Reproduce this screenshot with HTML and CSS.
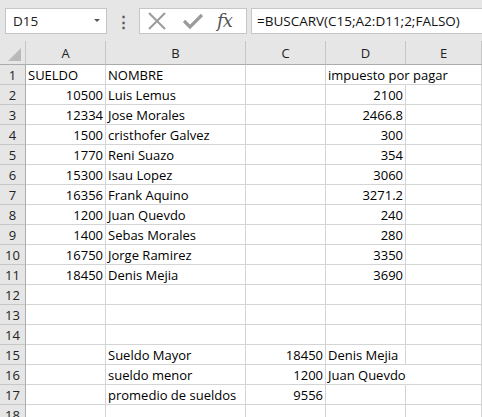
FILE: index.html
```html
<!DOCTYPE html>
<html lang="es">
<head>
    <meta charset="UTF-8">
    <title>BUSCARV - Hoja1</title>
    <link rel="stylesheet" href="styles.css">
</head>
<body>
    <div class="formula-bar">
        <div class="name-box">
            <span>D15</span>
            <span class="arrow"></span>
        </div>
        <div class="grip">⋮</div>
        <div class="icon-box">
            <svg width="20" height="18" viewBox="0 0 20 18"><path d="M2 1 L18 17 M18 1 L2 17" stroke="#9b9b9b" stroke-width="2" fill="none"/></svg>
            <svg width="20" height="18" viewBox="0 0 20 18"><path d="M1 9 L7 15 L19 3" stroke="#9b9b9b" stroke-width="3.2" fill="none"/></svg>
            <span class="fx">fx</span>
        </div>
        <div class="formula">=BUSCARV(C15;A2:D11;2;FALSO)</div>
    </div>

    <div class="sheet">
        <div class="corner"><span class="tri"></span></div>
        <div class="col-head">A</div>
        <div class="col-head">B</div>
        <div class="col-head">C</div>
        <div class="col-head">D</div>
        <div class="col-head">E</div>

        <div class="row-head">1</div>
        <div class="cell">SUELDO</div><div class="cell">NOMBRE</div><div class="cell"></div><div class="cell over">impuesto por pagar</div><div class="cell"></div>

        <div class="row-head">2</div>
        <div class="cell num">10500</div><div class="cell">Luis Lemus</div><div class="cell"></div><div class="cell num">2100</div><div class="cell"></div>
        <div class="row-head">3</div>
        <div class="cell num">12334</div><div class="cell">Jose Morales</div><div class="cell"></div><div class="cell num">2466.8</div><div class="cell"></div>
        <div class="row-head">4</div>
        <div class="cell num">1500</div><div class="cell">cristhofer Galvez</div><div class="cell"></div><div class="cell num">300</div><div class="cell"></div>
        <div class="row-head">5</div>
        <div class="cell num">1770</div><div class="cell">Reni Suazo</div><div class="cell"></div><div class="cell num">354</div><div class="cell"></div>
        <div class="row-head">6</div>
        <div class="cell num">15300</div><div class="cell">Isau Lopez</div><div class="cell"></div><div class="cell num">3060</div><div class="cell"></div>
        <div class="row-head">7</div>
        <div class="cell num">16356</div><div class="cell">Frank Aquino</div><div class="cell"></div><div class="cell num">3271.2</div><div class="cell"></div>
        <div class="row-head">8</div>
        <div class="cell num">1200</div><div class="cell">Juan Quevdo</div><div class="cell"></div><div class="cell num">240</div><div class="cell"></div>
        <div class="row-head">9</div>
        <div class="cell num">1400</div><div class="cell">Sebas Morales</div><div class="cell"></div><div class="cell num">280</div><div class="cell"></div>
        <div class="row-head">10</div>
        <div class="cell num">16750</div><div class="cell">Jorge Ramirez</div><div class="cell"></div><div class="cell num">3350</div><div class="cell"></div>
        <div class="row-head">11</div>
        <div class="cell num">18450</div><div class="cell">Denis Mejia</div><div class="cell"></div><div class="cell num">3690</div><div class="cell"></div>

        <div class="row-head">12</div>
        <div class="cell"></div><div class="cell"></div><div class="cell"></div><div class="cell"></div><div class="cell"></div>
        <div class="row-head">13</div>
        <div class="cell"></div><div class="cell"></div><div class="cell"></div><div class="cell"></div><div class="cell"></div>
        <div class="row-head">14</div>
        <div class="cell"></div><div class="cell"></div><div class="cell"></div><div class="cell"></div><div class="cell"></div>

        <div class="row-head">15</div>
        <div class="cell"></div><div class="cell">Sueldo Mayor</div><div class="cell num">18450</div><div class="cell">Denis Mejia</div><div class="cell"></div>
        <div class="row-head">16</div>
        <div class="cell"></div><div class="cell">sueldo menor</div><div class="cell num">1200</div><div class="cell over">Juan Quevdo</div><div class="cell"></div>
        <div class="row-head">17</div>
        <div class="cell"></div><div class="cell">promedio de sueldos</div><div class="cell num">9556</div><div class="cell"></div><div class="cell"></div>
        <div class="row-head">18</div>
        <div class="cell"></div><div class="cell"></div><div class="cell"></div><div class="cell"></div><div class="cell"></div>
    </div>
</body>
</html>
```

FILE: styles.css
```css
body {
    margin: 0;
    background: #e6e6e6;
    font-family: "Open Sans", "Liberation Sans", sans-serif;
    overflow: hidden;
    width: 482px;
    height: 417px;
}

.formula-bar {
    display: flex;
    align-items: center;
    height: 41px;
    padding-left: 5px;
}
.name-box {
    box-sizing: border-box;
    width: 102px;
    height: 26px;
    background: white;
    border: 1px solid #c6c6c6;
    display: flex;
    align-items: center;
    justify-content: space-between;
    padding: 0 6px 0 7px;
    font-size: 13.5px;
    color: #222;
}
.arrow {
    width: 0;
    height: 0;
    border-left: 3.5px solid transparent;
    border-right: 3.5px solid transparent;
    border-top: 3.5px solid #555;
}
.grip {
    width: 32px;
    text-align: center;
    color: #555;
    font-size: 15px;
    font-weight: bold;
}
.icon-box {
    box-sizing: border-box;
    width: 108px;
    height: 26px;
    background: white;
    border: 1px solid #c6c6c6;
    display: flex;
    align-items: center;
    gap: 16px;
    padding-left: 7px;
}
.fx {
    font-family: "DejaVu Serif", "Liberation Serif", serif;
    font-style: italic;
    font-size: 18px;
    color: #555;
    margin-left: -2px;
    letter-spacing: -1px;
}
.formula {
    box-sizing: border-box;
    flex: 1;
    height: 26px;
    margin-left: 4px;
    background: white;
    border: 1px solid #c6c6c6;
    border-right: none;
    padding-left: 5px;
    font-size: 13.5px;
    line-height: 24px;
    color: #111;
}

.sheet {
    display: grid;
    grid-template-columns: 26px 80px 140px 80px 80px 76px;
    grid-template-rows: 24px repeat(18, 20px);
    background: white;
    font-size: 13px;
}
.corner {
    background: #e6e6e6;
    border-right: 1px solid #c6c6c6;
    border-bottom: 1px solid #ababab;
    position: relative;
}
.tri {
    position: absolute;
    right: 4px;
    bottom: 3px;
    width: 0;
    height: 0;
    border-left: 13px solid transparent;
    border-bottom: 13px solid #b9b9b9;
}
.col-head {
    background: #e6e6e6;
    border-right: 1px solid #c6c6c6;
    border-bottom: 1px solid #ababab;
    text-align: center;
    line-height: 23px;
    color: #222;
    padding-top: 1px;
    box-sizing: border-box;
}
.row-head {
    background: #e6e6e6;
    border-right: 1px solid #ababab;
    border-bottom: 1px solid #c6c6c6;
    text-align: center;
    line-height: 20px;
    color: #222;
}
.cell {
    border-right: 1px solid #d4d4d4;
    border-bottom: 1px solid #d4d4d4;
    padding: 0 2px;
    line-height: 20px;
    white-space: nowrap;
    color: #000;
    min-width: 0;
}
.num {
    text-align: right;
}
/* text that spills into the next column hides the gridline */
.over {
    overflow: visible;
    position: relative;
    z-index: 1;
    border-right-color: transparent;
}
```
